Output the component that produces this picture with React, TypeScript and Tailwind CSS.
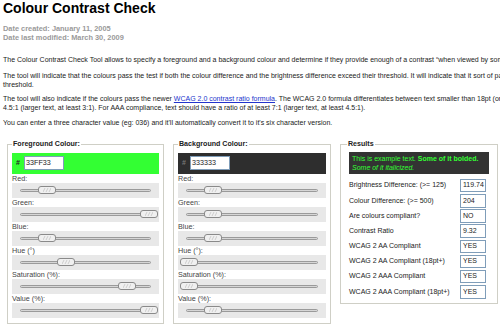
const font = { fontFamily: '"Liberation Sans", Arial, sans-serif' };

type SliderRow = { label: string; pos: number };

const fgRows: SliderRow[] = [
  { label: "Red:", pos: 26 },
  { label: "Green:", pos: 128 },
  { label: "Blue:", pos: 26 },
  { label: "Hue (°)", pos: 45 },
  { label: "Saturation (%):", pos: 106 },
  { label: "Value (%):", pos: 128 },
];

const bgRows: SliderRow[] = [
  { label: "Red:", pos: 26 },
  { label: "Green:", pos: 26 },
  { label: "Blue:", pos: 26 },
  { label: "Hue (°):", pos: 2 },
  { label: "Saturation (%):", pos: 2 },
  { label: "Value (%):", pos: 26 },
];

const results = [
  { label: "Brightness Difference: (>= 125)", value: "119.74" },
  { label: "Colour Difference: (>= 500)", value: "204" },
  { label: "Are colours compliant?", value: "NO" },
  { label: "Contrast Ratio", value: "9.32" },
  { label: "WCAG 2 AA Compliant", value: "YES" },
  { label: "WCAG 2 AA Compliant (18pt+)", value: "YES" },
  { label: "WCAG 2 AAA Compliant", value: "YES" },
  { label: "WCAG 2 AAA Compliant (18pt+)", value: "YES" },
];

function Slider({ pos }: { pos: number }) {
  return (
    <div className="relative h-[15px] bg-[#e8e8e8]">
      <div className="absolute left-[8px] right-[8px] top-[6px] h-[3px] rounded-full border border-[#9a9a9a] bg-[#d6d6d6]" />
      <div
        className="absolute top-[3.5px] flex h-[8px] w-[18px] items-center justify-center rounded-[3px] border border-[#8a8a8a] bg-[#f0f0f0]"
        style={{ left: pos }}
      >
        <svg width="8" height="4" viewBox="0 0 8 4">
          <path d="M0 4 L2 0 M3 4 L5 0 M6 4 L8 0" stroke="#c4c4c4" strokeWidth="0.8" />
        </svg>
      </div>
    </div>
  );
}

function ColourBox({
  legend,
  hex,
  swatch,
  hashColor,
  rows,
  width,
}: {
  legend: string;
  hex: string;
  swatch: string;
  hashColor: string;
  rows: SliderRow[];
  width: string;
}) {
  return (
    <fieldset className={`${width} border border-[#cfcfc6] px-[4px] pb-[5px]`}>
      <legend className="px-[1px] text-[7.1px] font-bold leading-[9px] text-[#222]">{legend}</legend>
      <div className={`mt-[4px] flex h-[21px] items-center pl-[4px] ${swatch}`}>
        <span className={`w-[8px] text-[7px] font-bold ${hashColor}`}>#</span>
        <div className="flex h-[13.5px] w-[40px] items-center border border-[#7f9db9] bg-white pl-[1px] text-[7.2px] text-[#222]">
          {hex}
        </div>
      </div>
      {rows.map((r) => (
        <div key={r.label}>
          <div className="h-[9px] text-[7.2px] leading-[9px] text-[#444]">{r.label}</div>
          <Slider pos={r.pos} />
        </div>
      ))}
    </fieldset>
  );
}

export default function App() {
  return (
    <div className="h-[328px] w-[500px] overflow-hidden bg-white" style={font}>
      <div className="w-[800px] pl-[3px] text-[#222]">
        <h1 className="mt-[1px] text-[14px] font-bold leading-[14px] text-black">Colour Contrast Check</h1>

        <div className="mt-[9px] text-[7.4px] font-bold leading-[9px] text-[#9a9a9a]">
          <div>Date created: January 11, 2005</div>
          <div>Date last modified: March 30, 2009</div>
        </div>

        <div className="mt-[12.5px] whitespace-nowrap text-[7px] leading-[9px]">
          <p>
            The Colour Contrast Check Tool allows to specify a foreground and a background colour and determine if they
            provide enough of a contrast “when viewed by someone having color deficits or when viewed on a black and
            white screen”.
          </p>
          <p className="mt-[7px]">
            The tool will indicate that the colours pass the test if both the colour difference and the brightness
            difference exceed their threshold. It will indicate that it sort of passes if only one of the two values
            exceed their
            <br />
            threshold.
          </p>
          <p className="mt-[5.5px]">
            The tool will also indicate if the colours pass the newer{" "}
            <span className="text-[#2233cc] underline">WCAG 2.0 contrast ratio formula</span>. The WCAG 2.0 formula
            differentiates between text smaller than 18pt (or 14pt bold) and larger text. For AA compliance, text
            should have a ratio of at least
            <br />
            4.5:1 (larger text, at least 3:1). For AAA compliance, text should have a ratio of at least 7:1 (larger
            text, at least 4.5:1).
          </p>
          <p className="mt-[5.5px]">
            You can enter a three character value (eg: 036) and it'll automatically convert it to it's six character
            version.
          </p>
        </div>

        <div className="ml-[4px] mt-[13px] flex items-start gap-[9px]">
          <ColourBox
            legend="Foreground Colour:"
            hex="33FF33"
            swatch="bg-[#33ff33]"
            hashColor="text-[#222]"
            rows={fgRows}
            width="w-[157px]"
          />
          <ColourBox
            legend="Background Colour:"
            hex="333333"
            swatch="bg-[#2e2e2e]"
            hashColor="text-[#777]"
            rows={bgRows}
            width="w-[158px]"
          />

          <fieldset className="w-[158px] border border-[#cfcfc6] pl-[8px] pr-[8px] pb-[3px]">
            <legend className="-ml-[2px] px-[1px] text-[7.1px] font-bold leading-[9px] text-[#222]">Results</legend>
            <div className="mt-[3px] h-[22px] bg-[#333333] pl-[3px] pt-[2px] text-[7px] leading-[9px] text-[#33ff33]">
              <div>
                This is example text. <b>Some of it bolded.</b>
              </div>
              <div className="italic">Some of it italicized.</div>
            </div>
            <div className="mt-[4.5px]">
              {results.map((r) => (
                <div key={r.label} className="flex h-[15.2px] items-center justify-between">
                  <span className="text-[7px] text-[#222]">{r.label}</span>
                  <div className="mr-[3px] flex h-[13.5px] w-[26px] items-center border border-[#7f9db9] bg-white pl-[2px] text-[7px] text-[#222]">
                    {r.value}
                  </div>
                </div>
              ))}
            </div>
          </fieldset>
        </div>
      </div>
    </div>
  );
}
